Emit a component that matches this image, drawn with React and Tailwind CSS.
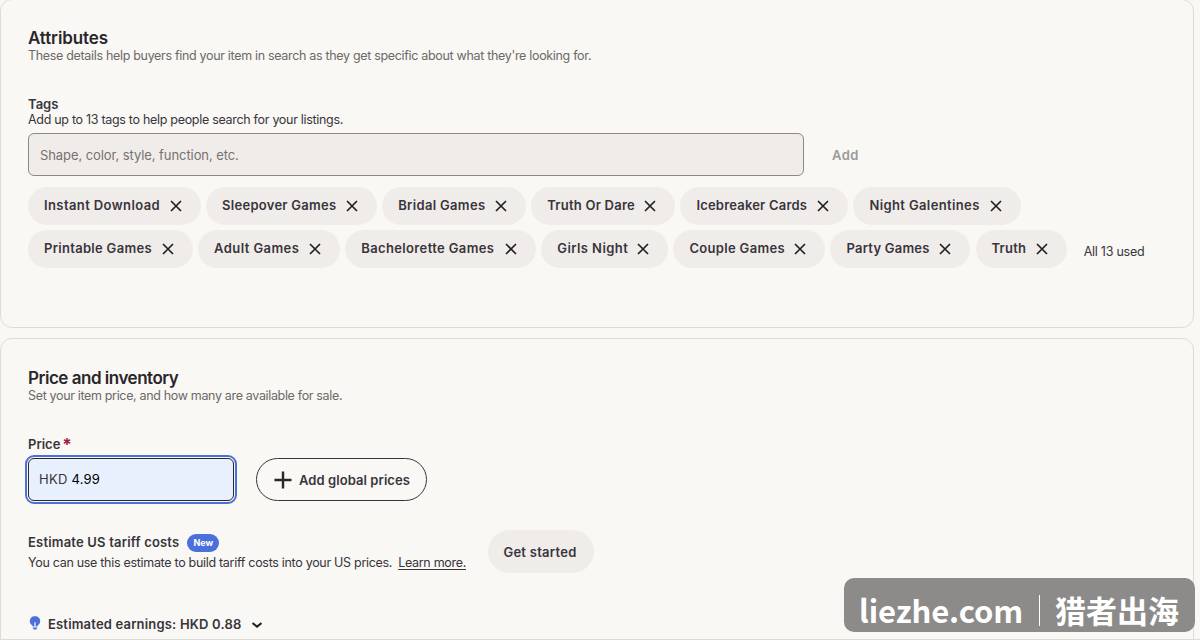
import { useState } from "react";

const initialTags = [
    { name: "Instant Download", style: "w-[173px] tracking-[0.4px]" },
    { name: "Sleepover Games", style: "w-[171px] tracking-[0.27px]" },
    { name: "Bridal Games", style: "w-[144px] tracking-[0.33px]" },
    { name: "Truth Or Dare", style: "w-[144px] tracking-[0.23px]" },
    { name: "Icebreaker Cards", style: "w-[168px] tracking-[0.2px]" },
    { name: "Night Galentines", style: "w-[168px] tracking-[0.37px]" },
    { name: "Printable Games", style: "w-[165px] tracking-[0.3px]" },
    { name: "Adult Games", style: "w-[142px] tracking-[0.42px]" },
    { name: "Bachelorette Games", style: "w-[191px] tracking-[0.37px]" },
    { name: "Girls Night", style: "w-[127px] tracking-[0.42px]" },
    { name: "Couple Games", style: "w-[152px] tracking-[0.33px]" },
    { name: "Party Games", style: "w-[140px] tracking-[0.23px]" },
    { name: "Truth", style: "w-[91px] tracking-[0.2px]" },
];

function CloseIcon() {

    return (
        <svg viewBox="0 0 10 10" className="w-2.5 h-2.5 shrink-0 overflow-visible" fill="none" stroke="#222" strokeWidth="1.7">
            <path d="M0 0L10 10M10 0L0 10" />
        </svg>
    );

}

function Tag({ tag, onRemove }) {

    return (
        <div className={`${tag.style} h-[38px] pl-4 pr-5 pb-px flex items-center justify-between rounded-full bg-[#f0ecea]`}>
            <span className="text-[13px] font-semibold whitespace-nowrap">{tag.name}</span>
            <button onClick={() => onRemove(tag.name)} aria-label="Remove" className="pt-px">
                <CloseIcon />
            </button>
        </div>
    );

}

function App() {

    const [tags, setTags] = useState(initialTags);

    function removeTag(name) {

        setTags(tags.filter((tag) => tag.name !== name));

    }

    return (

        <div className="relative w-[1200px] h-[640px] overflow-hidden border-b border-[#dddbd8] bg-[#faf8f5] text-[#38353b] font-[Inter,'Liberation_Sans',sans-serif]">

            <section className="w-[1194px] h-[329px] -mt-px px-[27px] pt-7 border border-[#dedcd9] rounded-xl bg-[#f9f8f4]">

                <h2 className="text-[17px] leading-5 font-semibold tracking-[-0.1px] text-[#29262c]">Attributes</h2>
                <p className="text-[12.5px] leading-4 tracking-[-0.32px] text-[#6c6967]">
                    These details help buyers find your item in search as they get specific about what they're looking for.
                </p>

                <h3 className="mt-8 text-[13px] leading-4 font-semibold">Tags</h3>
                <p className="text-[12.5px] leading-[15px] tracking-[-0.3px]">Add up to 13 tags to help people search for your listings.</p>

                <div className="mt-1.5 flex items-center">
                    <input
                        placeholder="Shape, color, style, function, etc."
                        className="w-[776px] h-[43px] px-[11px] rounded-md border border-[#918884] bg-[#f0ecea] text-[13px] tracking-[-0.08px] placeholder:text-[#77716f] placeholder:opacity-100"
                    />
                    <button className="ml-7 pt-0.5 text-[13px] font-semibold tracking-[0.5px] text-[#9b999a]">Add</button>
                </div>

                <div className="mt-[11px] flex flex-wrap gap-x-[5.1px] gap-y-[5px]">
                    {tags.map((tag) => (
                        <Tag key={tag.name} tag={tag} onRemove={removeTag} />
                    ))}
                    <span className="ml-3 pt-1.5 self-center text-[12.5px] tracking-[-0.25px]">All 13 used</span>
                </div>

            </section>

            <section className="w-[1194px] h-[340px] mt-2.5 px-[27px] pt-[29px] border border-[#dedcd9] rounded-xl bg-[#f9f8f4]">

                <h2 className="text-[17px] leading-5 font-semibold tracking-[-0.48px] text-[#29262c]">Price and inventory</h2>
                <p className="text-[12.5px] leading-4 tracking-[-0.34px] text-[#6c6967]">
                    Set your item price, and how many are available for sale.
                </p>

                <label className="mt-[30px] flex h-5 text-[13px] leading-5 font-semibold">
                    Price
                    <span className="ml-0.5 text-[17px] leading-[22px] font-bold text-[#a61a3a]">*</span>
                </label>

                <div className="mt-1 flex items-center">
                    <div className="w-[206px] h-[43px] px-2.5 pt-px flex items-center gap-1 rounded-md border border-[#29262c] bg-[#e8effd] outline-2 outline-offset-1 outline-[#4b6fdb]">
                        <span className="text-[13px] tracking-[0.25px]">HKD</span>
                        <span className="text-[13px] tracking-[0.2px] text-black">4.99</span>
                    </div>
                    <button className="w-[171px] h-[43px] ml-[22px] pl-[17px] flex items-center rounded-full border border-[#38353b] text-[13px] font-semibold tracking-[0.07px] whitespace-nowrap">
                        <svg viewBox="0 0 18 18" className="w-[18px] h-[18px] mr-[7px]" fill="none" stroke="#29262c" strokeWidth="2.4">
                            <path d="M9 0.5V17.5M0.5 9H17.5" />
                        </svg>
                        <span className="pt-0.5">Add global prices</span>
                    </button>
                </div>

                <div className="mt-[29px] flex">
                    <div className="w-[460px] pt-px">
                        <div className="flex items-center h-6 pb-px text-[13px] font-semibold tracking-[0.19px]">
                            Estimate US tariff costs
                            <span className="ml-2 w-8 h-[18px] flex items-center justify-center rounded-full bg-[#4b6fdb] text-white text-[9px] font-bold tracking-normal">New</span>
                        </div>
                        <p className="text-[12.5px] leading-4 tracking-[-0.3px] whitespace-nowrap">
                            You can use this estimate to build tariff costs into your US prices.
                            <a href="#" className="ml-1.5 underline underline-offset-2">Learn more.</a>
                        </p>
                    </div>
                    <button className="w-[106px] h-[43px] pt-0.5 pr-0.5 rounded-full bg-[#f0ecea] text-[13px] font-semibold tracking-[0.27px]">Get started</button>
                </div>

                <div className="mt-[41px] flex items-center text-[13px] leading-5 font-semibold tracking-[0.18px]">
                    <svg viewBox="0 0 12 14" className="w-3 h-3.5 ml-px mr-[7px] -mt-0.5" fill="#4b6fdb">
                        <path d="M6 0.2C2.9 0.2 0.8 2.3 0.8 5C0.8 7 2 8.5 3.6 9.7V10.6H5.4V6.2H6.6V10.6H8.4V9.7C10 8.5 11.2 7 11.2 5C11.2 2.3 9.1 0.2 6 0.2Z" />
                        <path d="M3.6 11.5H8.4L7.3 13.5H4.7Z" />
                    </svg>
                    Estimated earnings: HKD 0.88
                    <svg viewBox="0 0 10 6" className="w-2.5 h-1.5 ml-[11px] mt-px" fill="none" stroke="#222" strokeWidth="2">
                        <path d="M0.5 1L5 4.6L9.5 1" />
                    </svg>
                </div>

            </section>

            <div className="absolute left-[844px] top-[578px] w-[351px] h-[54px] pt-2.5 pl-[15px] flex items-center rounded-[10px] bg-[#8c8b89] text-white font-['Noto_Sans_CJK_SC',sans-serif] whitespace-nowrap">
                <span className="w-[180px] text-[31px] leading-10 font-bold tracking-[-0.1px]">liezhe.com</span>
                <span className="w-px h-[31px] bg-white"></span>
                <span className="ml-[15px] text-[31px] leading-10 font-bold">猎者出海</span>
            </div>

        </div>

    );

}

export default App;
